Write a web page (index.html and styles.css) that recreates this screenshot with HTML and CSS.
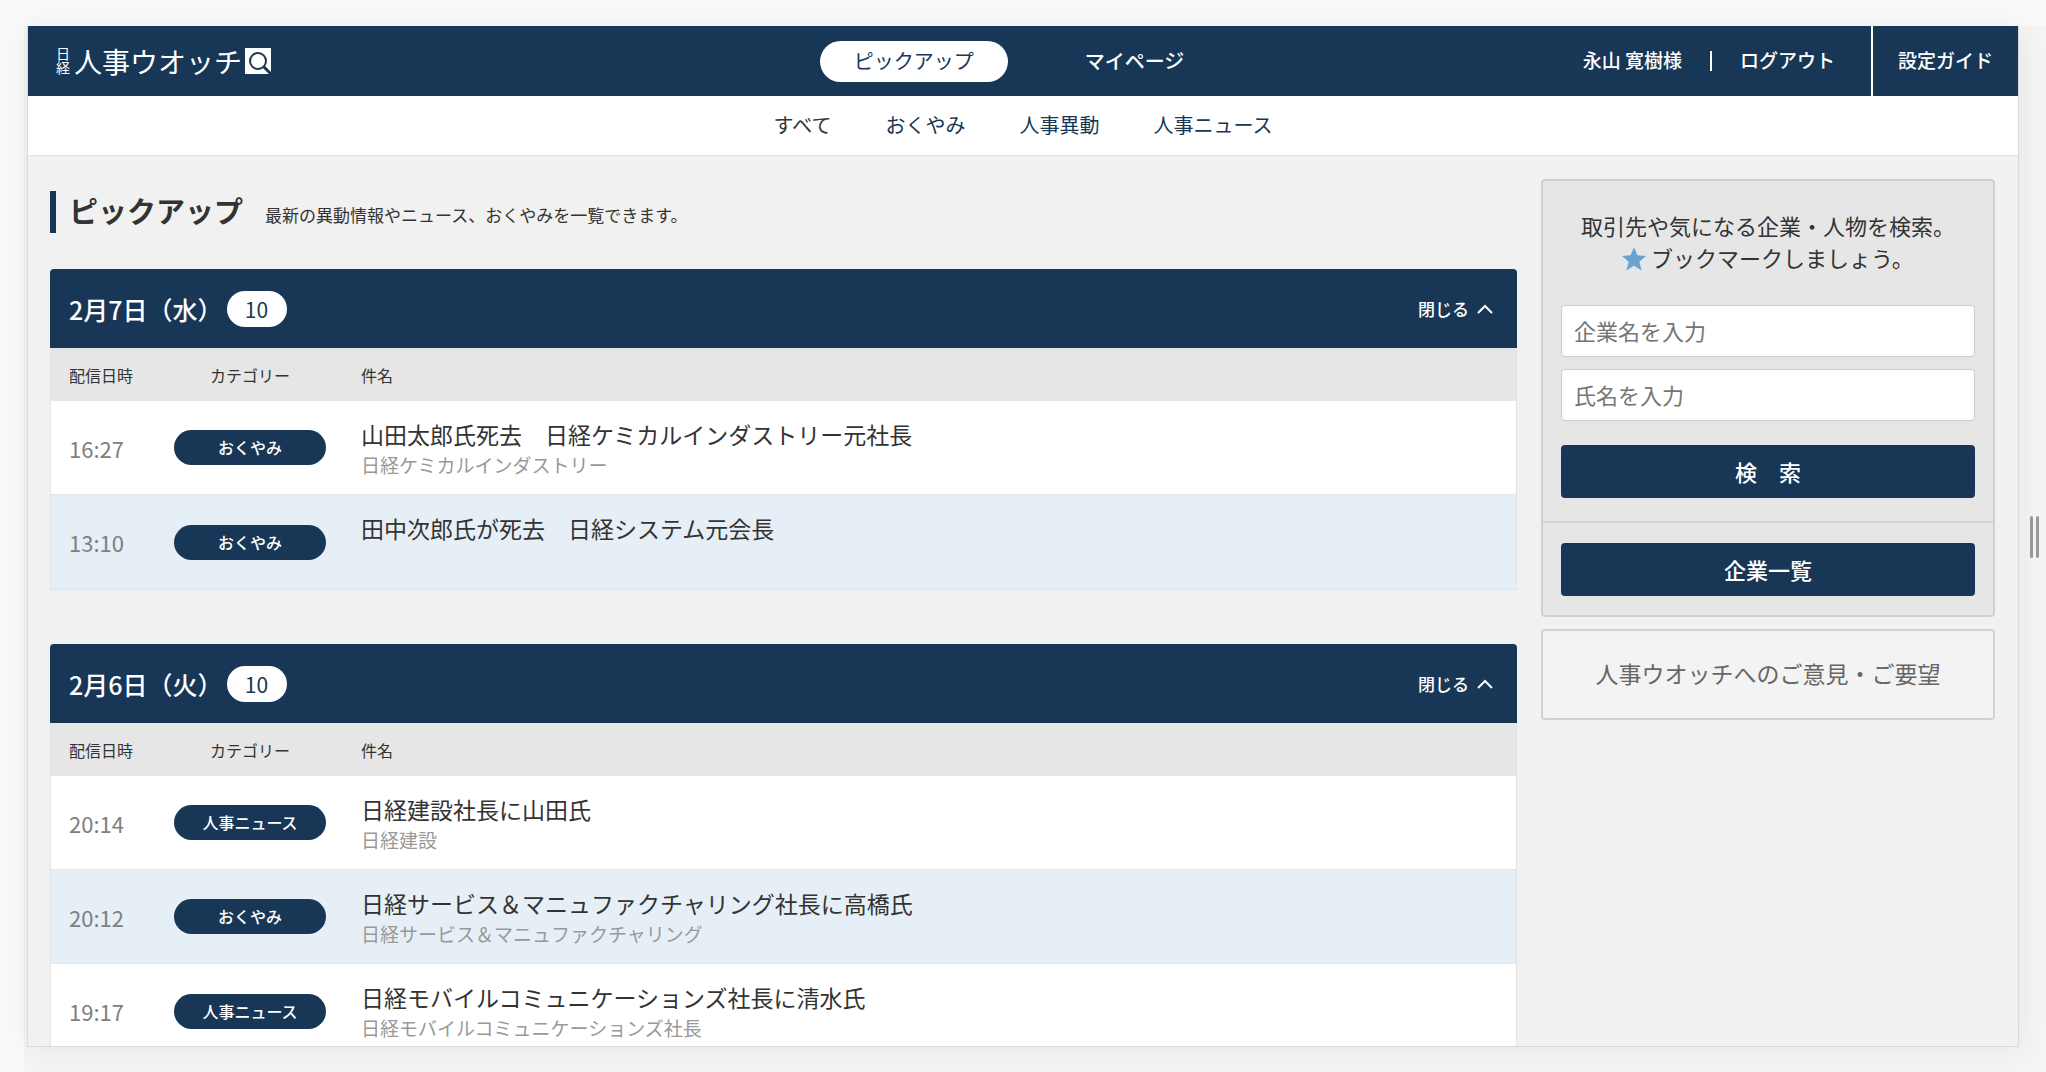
FILE: index.html
```html
<!DOCTYPE html>
<html lang="ja">
<head>
<meta charset="utf-8">
<meta name="viewport" content="width=device-width, initial-scale=1">
<title>日経 人事ウオッチ</title>
<link rel="stylesheet" href="styles.css">
</head>
<body>
<div class="stage">
  <div class="window">
    <header class="header">
      <a class="logo" href="#">
        <span class="logo-brand">日経</span>
        <span class="logo-name">人事ウオッチ</span>
        <svg class="logo-icon" viewBox="0 0 26 26" aria-hidden="true">
          <rect width="26" height="26" fill="#fff"/>
          <circle cx="13" cy="13" r="8" fill="none" stroke="#183756" stroke-width="2"/>
          <path d="M18.500 18.500L26 26" stroke="#183756" stroke-width="3"/>
        </svg>
      </a>
      <nav class="nav">
        <a class="nav-link nav-link-active" href="#">ピックアップ</a>
        <a class="nav-link" href="#">マイページ</a>
      </nav>
      <div class="account">
        <span>永山 寛樹様</span>
        <span class="account-rule"></span>
        <a class="account-link" href="#">ログアウト</a>
        <a class="guide" href="#">設定ガイド</a>
      </div>
    </header>
    <nav class="subnav">
      <a class="subnav-link subnav-current" href="#">すべて</a>
      <a class="subnav-link" href="#">おくやみ</a>
      <a class="subnav-link" href="#">人事異動</a>
      <a class="subnav-link" href="#">人事ニュース</a>
    </nav>
    <div class="content">
      <main class="main">
        <div class="page-head">
          <h1 class="page-title">ピックアップ</h1>
          <p class="page-lead">最新の異動情報やニュース、おくやみを一覧できます。</p>
        </div>

        <section class="day">
          <div class="day-head">
            <h2 class="day-title">2月7日（水）</h2>
            <span class="count">10</span>
            <button class="toggle" type="button">閉じる
              <svg class="chevron" viewBox="0 0 16 10" aria-hidden="true"><path d="M1 9L8 2L15 9" fill="none" stroke="#fff" stroke-width="2"/></svg>
            </button>
          </div>
          <table class="list">
            <thead>
              <tr><th class="col-time">配信日時</th><th class="col-cat">カテゴリー</th><th class="col-title">件名</th></tr>
            </thead>
            <tbody>
              <tr><td class="time">16:27</td><td><span class="tag">おくやみ</span></td><td class="subject"><a class="subject-title" href="#">山田太郎氏死去　日経ケミカルインダストリー元社長</a><span class="company">日経ケミカルインダストリー</span></td></tr>
              <tr><td class="time">13:10</td><td><span class="tag">おくやみ</span></td><td class="subject"><a class="subject-title" href="#">田中次郎氏が死去　日経システム元会長</a><span class="company"></span></td></tr>
            </tbody>
          </table>
        </section>

        <section class="day">
          <div class="day-head">
            <h2 class="day-title">2月6日（火）</h2>
            <span class="count">10</span>
            <button class="toggle" type="button">閉じる
              <svg class="chevron" viewBox="0 0 16 10" aria-hidden="true"><path d="M1 9L8 2L15 9" fill="none" stroke="#fff" stroke-width="2"/></svg>
            </button>
          </div>
          <table class="list">
            <thead>
              <tr><th class="col-time">配信日時</th><th class="col-cat">カテゴリー</th><th class="col-title">件名</th></tr>
            </thead>
            <tbody>
              <tr><td class="time">20:14</td><td><span class="tag">人事ニュース</span></td><td class="subject"><a class="subject-title" href="#">日経建設社長に山田氏</a><span class="company">日経建設</span></td></tr>
              <tr><td class="time">20:12</td><td><span class="tag">おくやみ</span></td><td class="subject"><a class="subject-title" href="#">日経サービス＆マニュファクチャリング社長に高橋氏</a><span class="company">日経サービス＆マニュファクチャリング</span></td></tr>
              <tr><td class="time">19:17</td><td><span class="tag">人事ニュース</span></td><td class="subject"><a class="subject-title" href="#">日経モバイルコミュニケーションズ社長に清水氏</a><span class="company">日経モバイルコミュニケーションズ社長</span></td></tr>
            </tbody>
          </table>
        </section>
      </main>

      <aside class="side">
        <div class="panel">
          <form class="search">
            <p class="search-lead">取引先や気になる企業・人物を検索。<br>
              <svg class="star" viewBox="0 0 24 24" aria-hidden="true"><path d="M12 0L15.400 8.200L24 9L17.400 14.800L19.600 23.600L12 18.800L4.400 23.600L6.600 14.800L0 9L8.600 8.200Z" fill="#6aa3d0"/></svg>
              ブックマークしましょう。</p>
            <input class="field" type="text" placeholder="企業名を入力" aria-label="企業名">
            <input class="field" type="text" placeholder="氏名を入力" aria-label="氏名">
            <button class="button button-search" type="submit">検　索</button>
          </form>
          <div class="companies">
            <button class="button" type="button">企業一覧</button>
          </div>
        </div>
        <a class="feedback" href="#">人事ウオッチへのご意見・ご要望</a>
      </aside>
    </div>
  </div>
  <div class="grip"><span class="grip-bar"></span><span class="grip-bar"></span></div>
</div>
</body>
</html>
```
FILE: styles.css
```css
* {
  box-sizing: border-box;
}

body {
  margin: 0;
  background: #fafafa;
  color: #333;
  font-family: "Noto Sans CJK JP", "Noto Sans", sans-serif;
  font-size: 20px;
  line-height: 30px;
}

h1, h2, p {
  margin: 0;
}

a {
  color: inherit;
  text-decoration: none;
}

button, input {
  font-family: inherit;
}

.stage {
  display: flex;
  align-items: flex-start;
  height: calc(100vh - 26px);
  margin: 26px 0 0 24px;
  padding: 0 0 25px 3px;
  background: #f4f4f4;
}

/* application window */
.window {
  flex: 1;
  height: 100%;
  overflow: hidden;
  border: 1px solid #d9dadb;
  border-top: 0;
  background: #f1f1f1;
  box-shadow: 0 0 28px rgba(0, 0, 0, 0.07);
}

.header {
  display: grid;
  grid-template-columns: 1fr auto 1fr;
  align-items: center;
  height: 70px;
  background: #183756;
  color: #fff;
}

.logo {
  display: flex;
  align-items: center;
  padding-left: 28px;
}

.logo-brand {
  margin-right: 4px;
  font-size: 14px;
  line-height: 14px;
  writing-mode: vertical-rl;
}

.logo-name {
  font-size: 28px;
  line-height: 28px;
}

.logo-icon {
  width: 26px;
  height: 26px;
  margin-left: 3px;
}

.nav {
  display: flex;
  gap: 43px;
  padding-right: 8px;
}

.nav-link {
  padding: 5px 34px 6px;
  border-radius: 21px;
  font-weight: 500;
}

.nav-link-active {
  background: #fff;
  color: #183756;
  font-weight: 400;
}

.account {
  display: flex;
  justify-content: flex-end;
  align-items: center;
  font-size: 19px;
  font-weight: 500;
  line-height: 68px;
}

.account-rule {
  width: 2px;
  height: 20px;
  margin: 0 28px;
  background: #fff;
}

.guide {
  margin-left: 36px;
  padding: 0 25px 2px;
  border-left: 2px solid #fff;
}

.account > span:first-child,
.account-link {
  padding-bottom: 2px;
}

.subnav {
  display: flex;
  justify-content: center;
  gap: 54px;
  padding: 14px 0 15px;
  border-bottom: 1px solid #e2e2e2;
  background: #fff;
}

.subnav-link {
  color: #183756;
}

.subnav-current {
  color: #333;
}

.content {
  display: grid;
  grid-template-columns: 1fr 454px;
  align-items: start;
  gap: 24px;
  padding: 23px 23px 25px 22px;
}

.page-head {
  display: flex;
  align-items: flex-start;
  gap: 22px;
  margin: 12px 0 36px;
  padding-left: 13px;
  border-left: 6px solid #183756;
}

.page-title {
  padding-bottom: 4px;
  font-size: 29px;
  line-height: 38px;
}

.page-lead {
  padding-top: 9px;
  font-size: 17px;
}

/* one block of the list per day */
.day {
  margin-bottom: 54px;
}

.day-head {
  display: flex;
  align-items: center;
  height: 79px;
  padding: 0 24px 0 19px;
  border-radius: 4px 4px 0 0;
  background: #183756;
  color: #fff;
}

.day-title {
  font-size: 25px;
  font-weight: 500;
}

.count {
  min-width: 60px;
  margin-left: 4px;
  border-radius: 18px;
  background: #fff;
  color: #183756;
  font-size: 21px;
  line-height: 36px;
  text-align: center;
}

.toggle {
  display: flex;
  align-items: center;
  gap: 8px;
  margin-left: auto;
  padding: 0;
  border: 0;
  background: none;
  color: #fff;
  font-size: 17px;
  font-weight: 500;
  cursor: pointer;
}

.chevron {
  width: 16px;
  height: 10px;
}

.list {
  width: 100%;
  border: 1px solid #e2e4e6;
  border-spacing: 0;
  border-top: 0;
  table-layout: fixed;
}

.list th {
  height: 53px;
  padding: 0;
  background: #e6e6e6;
  font-size: 16px;
  font-weight: 400;
  text-align: left;
}

.list .col-time {
  width: 123px;
  padding-left: 18px;
}

.list .col-cat {
  width: 152px;
  text-align: center;
}

.list .col-title {
  padding-left: 35px;
}

.list td {
  height: 94px;
  padding: 0;
  border-bottom: 1px solid #e2e6e9;
  background: #fff;
}

.list tr:nth-child(even) td {
  background: #e6eff5;
}

.list tr:last-child td {
  border-bottom: 0;
}

.list .time {
  padding-left: 18px;
  color: #808080;
  font-size: 22px;
}

.tag {
  display: block;
  border-radius: 18px;
  background: #183756;
  color: #fff;
  font-size: 16px;
  font-weight: 500;
  line-height: 35px;
  text-align: center;
}

.list .subject {
  padding: 2px 16px 0 35px;
}

.subject-title {
  display: block;
  font-size: 23px;
  line-height: 32px;
}

.company {
  display: block;
  min-height: 30px;
  color: #999;
  font-size: 19px;
}

.panel {
  border: 2px solid #d1d1d1;
  border-radius: 4px;
  background: #e6e6e6;
}

.search {
  padding: 28px 18px 23px;
}

.search-lead {
  margin-bottom: 32px;
  font-size: 22px;
  line-height: 32px;
  text-align: center;
}

.star {
  width: 24px;
  height: 24px;
  vertical-align: -4px;
}

.field {
  display: block;
  width: 100%;
  height: 52px;
  margin-bottom: 12px;
  padding: 0 12px 2px;
  border: 1px solid #ccc;
  border-radius: 4px;
  background: #fff;
  color: #333;
  font-size: 22px;
}

.field::placeholder {
  color: #757575;
}

.button {
  display: block;
  width: 100%;
  height: 53px;
  padding: 0 0 2px;
  border: 0;
  border-radius: 4px;
  background: #183756;
  color: #fff;
  font-size: 22px;
  font-weight: 500;
  cursor: pointer;
}

.button-search {
  margin-top: 24px;
}

.companies {
  padding: 20px 18px 19px;
  border-top: 2px solid #d1d1d1;
}

.feedback {
  display: block;
  margin-top: 12px;
  padding: 27px 0 30px;
  border: 2px solid #d1d1d1;
  border-radius: 4px;
  background: #f3f3f3;
  color: #666;
  font-size: 23px;
  text-align: center;
}

/* resize handle on the right edge */
.grip {
  display: flex;
  justify-content: center;
  align-self: center;
  gap: 3px;
  width: 27px;
  padding-left: 3px;
}

.grip-bar {
  width: 3px;
  height: 42px;
  border-radius: 2px;
  background: #999;
}
```
